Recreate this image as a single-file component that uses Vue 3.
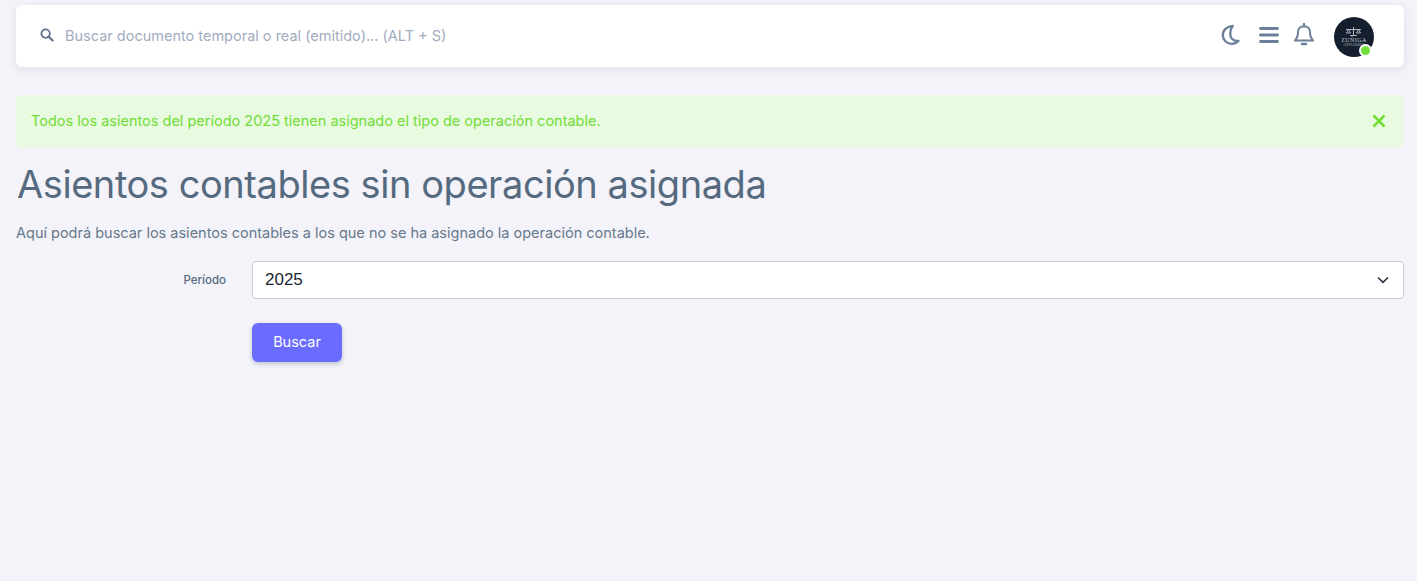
<template>
  <div class="page">
    <header class="topbar">
      <div class="search">
        <svg class="search-icon" width="14" height="14" viewBox="0 0 14 14" fill="none">
          <circle cx="5.600" cy="5.600" r="4.200" stroke="#5d6f8c" stroke-width="1.800" />
          <path d="M8.800 8.800 12.600 12.600" stroke="#5d6f8c" stroke-width="2.100" stroke-linecap="round" />
        </svg>
        <span class="placeholder">Buscar documento temporal o real (emitido)... (ALT + S)</span>
      </div>
      <div class="actions">
        <svg class="moon" width="20" height="22" viewBox="0 0 20 22" fill="none">
          <path d="M11.800 1.800C6.400 2.200 1.800 5.800 1.800 11c0 5 4 8.800 8.800 8.800 2.800 0 5.400-1.100 7-3-4.600.6-8.400-2.300-8.400-6.900 0-3.400 1-6 2.600-8.100Z" stroke="#6b7f99" stroke-width="2.300" stroke-linejoin="round" />
        </svg>
        <svg class="burger" width="20" height="18" viewBox="0 0 20 18" fill="none">
          <path d="M1.500 2.500h17M1.500 9h17M1.500 15.500h17" stroke="#6b7f99" stroke-width="2.900" stroke-linecap="round" />
        </svg>
        <svg class="bell" width="22" height="24" viewBox="0 0 22 24" fill="none">
          <path d="M11 3.200c-3.800 0-6 2.600-6 5.800 0 4.500-.9 6.400-3.100 8.400h18.200c-2.200-2-3.100-3.900-3.100-8.400 0-3.200-2.200-5.800-6-5.800Z" stroke="#6b7f99" stroke-width="2" stroke-linejoin="round" />
          <path d="M11 1v2M9 21h4" stroke="#6b7f99" stroke-width="2.400" stroke-linecap="round" />
        </svg>
        <div class="avatar">
          <svg width="40" height="40" viewBox="0 0 40 40" fill="none">
            <path d="M12 12.500h15M19.500 10v8M14.500 12.500l-2 3.500h4l-2-3.500ZM24.500 12.500l-2 3.500h4l-2-3.500ZM16 18.500h7" stroke="#c0c6cd" stroke-width=".9" />
            <text x="20" y="24.500" class="logo-name">ZUÑIGA</text>
            <text x="20" y="28.500" class="logo-sub">CONTADORES</text>
          </svg>
          <span class="status"></span>
        </div>
      </div>
    </header>

    <div class="alert">
      <span>Todos los asientos del período {{ period }} tienen asignado el tipo de operación contable.</span>
      <button class="alert-close" type="button" aria-label="Cerrar">
        <svg width="14" height="14" viewBox="0 0 14 14" fill="none">
          <path d="M1.500 1.500 12.500 12.500M12.500 1.500 1.500 12.500" stroke="#71dd37" stroke-width="2.500" />
        </svg>
      </button>
    </div>

    <h1 class="title">Asientos contables sin operación asignada</h1>
    <p class="subtitle">Aquí podrá buscar los asientos contables a los que no se ha asignado la operación contable.</p>

    <div class="form-row">
      <label class="form-label">Período</label>
      <div class="select">
        <span>{{ period }}</span>
        <svg width="12" height="8" viewBox="0 0 12 8" fill="none">
          <path d="M1 1.500 6 6.300 11 1.500" stroke="#22303f" stroke-width="1.600" />
        </svg>
      </div>
    </div>
    <div class="form-row actions-row">
      <span class="form-label"></span>
      <button class="btn-search" type="button">Buscar</button>
    </div>
  </div>
</template>

<script setup>
import { ref } from 'vue'

const period = ref('2025')
</script>

<style scoped>
.page {
  min-height: 581px;
  box-sizing: border-box;
  padding: 5px 13px 0 16px;
  background: #f3f3f9;
  font-family: Inter, "Liberation Sans", sans-serif;
  color: #566a7f;
}
.topbar {
  height: 62px;
  box-sizing: border-box;
  display: flex;
  align-items: center;
  justify-content: space-between;
  padding: 0 30px 0 24px;
  background: #fff;
  border-radius: 6px;
  box-shadow: 0 2px 8px rgba(67, 89, 113, 0.12);
}
.search {
  display: flex;
  align-items: center;
  gap: 11px;
  margin-top: -2px;
}
.search-icon {
  flex: none;
}
.placeholder {
  font-size: 14.500px;
  color: #a1acc0;
}
.actions {
  display: flex;
  align-items: center;
  margin-top: 2px;
}
.moon {
  margin: -4px 18px 0 0;
}
.burger {
  margin: -4px 14px 0 0;
}
.bell {
  margin: -4px 19px 0 0;
}
.avatar {
  position: relative;
  width: 40px;
  height: 40px;
  border-radius: 50%;
  background: #141e2c;
}
.avatar svg {
  display: block;
}
.logo-name {
  font-size: 6px;
  letter-spacing: 0.4px;
  fill: #c6ccd2;
  text-anchor: middle;
  font-family: "Liberation Serif", serif;
}
.logo-sub {
  font-size: 3.200px;
  fill: #a5adb6;
  text-anchor: middle;
  font-family: "Liberation Serif", serif;
}
.status {
  position: absolute;
  right: 2px;
  bottom: 0;
  width: 9px;
  height: 9px;
  border-radius: 50%;
  background: #71dd37;
  border: 2px solid #fff;
}
.alert {
  height: 53px;
  box-sizing: border-box;
  margin-top: 28px;
  display: flex;
  align-items: center;
  justify-content: space-between;
  padding: 0 18px 2px 15px;
  background: #e8fadf;
  border-radius: 6px;
  color: #71dd37;
  font-size: 14.500px;
}
.alert-close {
  display: flex;
  padding: 0;
  border: 0;
  background: none;
}
.title {
  margin: 12px 0 0 1px;
  font-size: 38px;
  line-height: 48px;
  letter-spacing: -0.44px;
  font-weight: 400;
  color: #566a7f;
}
.subtitle {
  margin: 13px 0 0;
  font-size: 14.500px;
  line-height: 23px;
  color: #67798c;
}
.form-row {
  display: flex;
  align-items: center;
  margin-top: 17px;
}
.form-label {
  width: 210px;
  flex: none;
  text-align: right;
  font-size: 11.500px;
  font-weight: 500;
}
.select {
  flex: 1;
  height: 38px;
  margin-left: 26px;
  box-sizing: border-box;
  display: flex;
  align-items: center;
  justify-content: space-between;
  padding: 0 14px 0 12px;
  background: #fff;
  border: 1px solid #c9ced6;
  border-radius: 4px;
  font-family: "Liberation Sans", sans-serif;
  font-size: 17px;
  color: #1b2533;
}
.actions-row {
  margin-top: 24px;
}
.btn-search {
  width: 90px;
  height: 39px;
  margin-left: 26px;
  padding: 0 0 2px;
  border: 0;
  border-radius: 6px;
  background: #696cff;
  color: #fff;
  font-family: inherit;
  font-size: 14.500px;
  box-shadow: 0 2px 4px rgba(67, 89, 113, 0.3);
}
</style>

<style>
body {
  background: #f3f3f9;
}
</style>
